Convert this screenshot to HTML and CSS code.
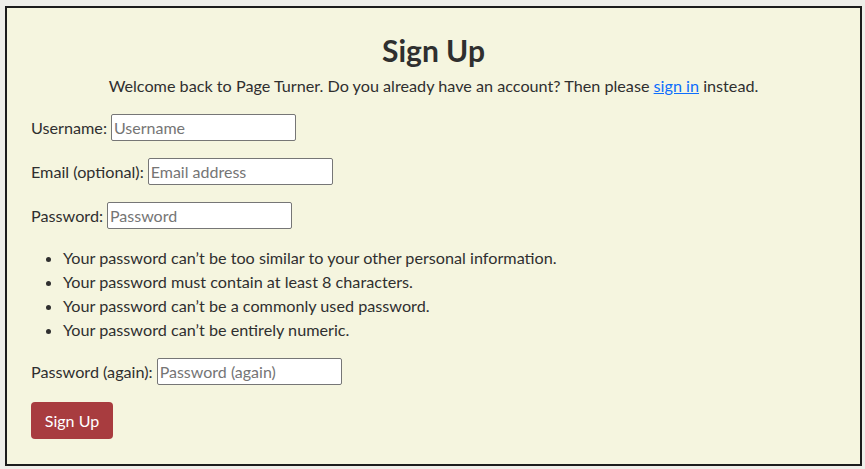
FILE: index.html
```html
<!DOCTYPE html>
<html lang="en">
<head>
<meta charset="utf-8">
<title>Sign Up</title>
<link rel="stylesheet" href="styles.css">
</head>
<body>
<main class="card">
  <h2 class="title">Sign Up</h2>
  <p class="intro">Welcome back to Page Turner. Do you already have an account? Then please <a href="#">sign in</a> instead.</p>
  <form class="form">
    <div class="row"><label for="u">Username:</label><input id="u" class="field" type="text" placeholder="Username"></div>
    <div class="row"><label for="e">Email (optional):</label><input id="e" class="field" type="email" placeholder="Email address"></div>
    <div class="row"><label for="p">Password:</label><input id="p" class="field" type="password" placeholder="Password"></div>
    <ul class="rules">
      <li>Your password can’t be too similar to your other personal information.</li>
      <li>Your password must contain at least 8 characters.</li>
      <li>Your password can’t be a commonly used password.</li>
      <li>Your password can’t be entirely numeric.</li>
    </ul>
    <div class="row"><label for="p2">Password (again):</label><input id="p2" class="field" type="password" placeholder="Password (again)"></div>
    <button class="btn" type="submit">Sign Up</button>
  </form>
</main>
</body>
</html>
```
FILE: styles.css
```css
html, body {
  margin: 0;
  background: #eeeee9;
}
body {
  padding: 6px 3px 3px 5px;
  font-family: "Lato", "Open Sans", sans-serif;
  font-size: 16.2px;
  line-height: 24px;
  color: #2f2f2f;
}
.card {
  box-sizing: border-box;
  height: 460px;
  border: 2px solid #1c1c1c;
  background: #f5f5df;
  padding: 22px 24px 0 24px;
}
.title {
  margin: 0;
  text-align: center;
  font-size: 30px;
  line-height: 40px;
  font-weight: 700;
  color: #2f2f2f;
}
.intro {
  margin: 4px 0 0 0;
  text-align: center;
}
.intro a {
  color: #0d6efd;
  text-decoration: underline;
}
.form {
  margin-top: 16px;
}
.row {
  display: flex;
  align-items: center;
  gap: 4px;
  height: 27px;
  margin-bottom: 17px;
}
.field {
  box-sizing: border-box;
  width: 185px;
  height: 27px;
  padding: 1px 2px;
  border: 1px solid #767676;
  border-radius: 2px;
  background: #ffffff;
  font-family: inherit;
  font-size: 16px;
  color: #333;
}
.field::placeholder {
  color: #757575;
}
.rules {
  margin: 0 0 16px 0;
  padding-left: 32px;
}
.rules li {
  line-height: 24px;
}
.btn {
  display: block;
  width: 82px;
  height: 37px;
  border: none;
  border-radius: 4px;
  background: #a83c3f;
  color: #ffffff;
  font-family: inherit;
  font-size: 16px;
  padding: 0;
}
```
